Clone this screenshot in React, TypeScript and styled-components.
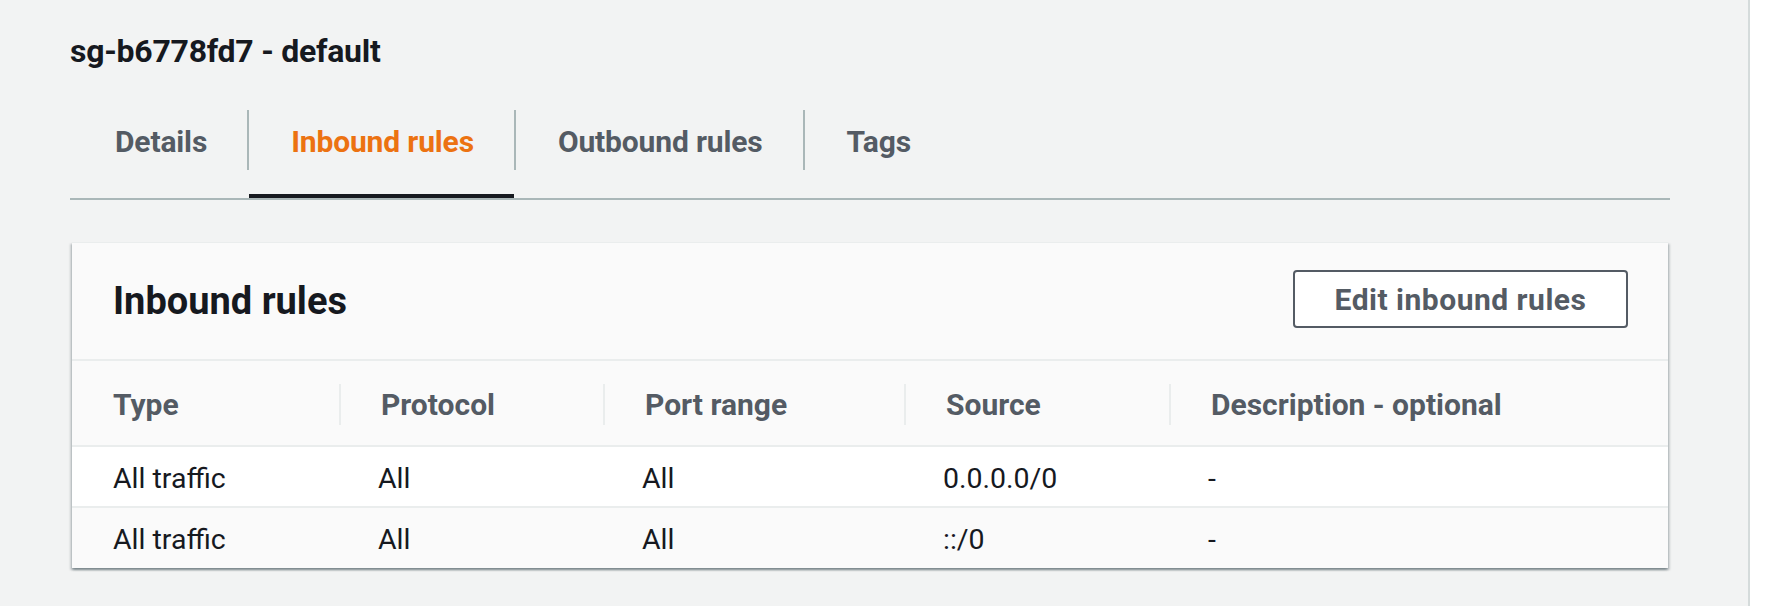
import React, { useState } from "react";
import styled, { createGlobalStyle } from "styled-components";

const GlobalStyle = createGlobalStyle`
  html, body {
    margin: 0;
    padding: 0;
    background: #f2f3f3;
  }
  body {
    font-family: Roboto, "Liberation Sans", Arial, sans-serif;
    color: #16191f;
  }
  * { box-sizing: border-box; }
`;

const Shell = styled.div`
  display: flex;
  min-height: 100vh;
  height: 606px;
  background: #f2f3f3;
`;

const Main = styled.main`
  flex: 1;
  padding: 33px 0 0 70px;
`;

const Content = styled.div`
  width: 1600px;
`;

const Side = styled.aside`
  width: 32px;
  border-left: 2px solid #d5dbdb;
  background: #ffffff;
`;

const Title = styled.h1`
  margin: 0;
  font-size: 32px;
  line-height: 36px;
  font-weight: 700;
  letter-spacing: -0.25px;
  color: #16191f;
`;

const TabList = styled.div`
  display: flex;
  margin-top: 31px;
  padding-left: 3px;
  border-bottom: 2px solid #aab7b8;
`;

const Tab = styled.button<{ $active: boolean; $first: boolean }>`
  position: relative;
  margin: 0;
  padding: 10px 0 28px;
  border: 0;
  background: none;
  font-family: inherit;
  font-size: 30px;
  font-weight: 700;
  letter-spacing: -0.15px;
  color: ${(p) => (p.$active ? "#ec7211" : "#545b64")};
  cursor: pointer;

  &::after {
    content: "";
    display: ${(p) => (p.$active ? "block" : "none")};
    position: absolute;
    left: ${(p) => (p.$first ? "0" : "2px")};
    right: 0;
    bottom: 0;
    height: 4px;
    background: #16191f;
  }
`;

const TabLabel = styled.span<{ $first: boolean }>`
  display: block;
  height: 60px;
  padding: 4px 40px 0 42px;
  line-height: 56px;
  border-left: ${(p) => (p.$first ? "none" : "2px solid #aab7b8")};
  white-space: nowrap;
`;

const Panel = styled.section`
  margin: 42px 2px 0;
  background: #ffffff;
  border-top: 1px solid #eaeded;
  box-shadow: 0 2px 2px 0 rgba(0, 28, 36, 0.3), 2px 2px 2px 0 rgba(0, 28, 36, 0.15),
    -2px 2px 2px 0 rgba(0, 28, 36, 0.15);
`;

const PanelHeader = styled.header`
  display: flex;
  align-items: center;
  justify-content: space-between;
  height: 118px;
  padding: 0 40px 0 41px;
  background: #fafafa;
  border-bottom: 2px solid #eaeded;
`;

const Heading = styled.h2`
  margin: 0;
  font-size: 38px;
  line-height: 44px;
  font-weight: 700;
  color: #16191f;
`;

const Button = styled.button`
  width: 335px;
  height: 58px;
  margin-bottom: 4px;
  border: 2px solid #545b64;
  border-radius: 4px;
  background: #ffffff;
  color: #545b64;
  font-family: inherit;
  font-size: 30px;
  font-weight: 700;
  letter-spacing: 0.5px;
  cursor: pointer;
`;

const Table = styled.table`
  width: 100%;
  border-collapse: collapse;
  table-layout: fixed;
`;

const Col = styled.col<{ $w?: number }>`
  width: ${(p) => (p.$w ? `${p.$w}px` : "auto")};
`;

const HeadRow = styled.tr`
  height: 85px;
  background: #fafafa;
`;

const Th = styled.th`
  padding: 2px 0 0;
  text-align: left;
  vertical-align: middle;
  font-size: 30px;
  font-weight: 700;
  color: #545b64;
`;

const ThInner = styled.div<{ $first: boolean }>`
  height: 41px;
  line-height: 41px;
  padding-left: ${(p) => (p.$first ? "41px" : "40px")};
  border-left: ${(p) => (p.$first ? "none" : "2px solid #eaeded")};
  white-space: nowrap;
`;

const Row = styled.tr<{ $alt: boolean }>`
  height: 61px;
  border-top: 2px solid #eaeded;
  background: ${(p) => (p.$alt ? "#fafafa" : "#ffffff")};
`;

const Td = styled.td`
  padding: 4px 0 0 39px;
  font-size: 28.5px;
  line-height: 34px;
  color: #16191f;
  vertical-align: middle;
  white-space: nowrap;

  &:first-child {
    padding-left: 41px;
  }
`;

const tabs = ["Details", "Inbound rules", "Outbound rules", "Tags"];
const columns = [
  { label: "Type", width: 267 },
  { label: "Protocol", width: 264 },
  { label: "Port range", width: 301 },
  { label: "Source", width: 265 },
  { label: "Description - optional" },
];
const rules = [
  ["All traffic", "All", "All", "0.0.0.0/0", "-"],
  ["All traffic", "All", "All", "::/0", "-"],
];

export default function App() {
  const [active, setActive] = useState(1);
  return (
    <>
      <GlobalStyle />
      <Shell>
        <Main>
          <Content>
            <Title>sg-b6778fd7 - default</Title>
            <TabList role="tablist">
              {tabs.map((t, i) => (
                <Tab
                  key={t}
                  role="tab"
                  $active={i === active}
                  $first={i === 0}
                  onClick={() => setActive(i)}
                >
                  <TabLabel $first={i === 0}>{t}</TabLabel>
                </Tab>
              ))}
            </TabList>
            <Panel>
              <PanelHeader>
                <Heading>Inbound rules</Heading>
                <Button>Edit inbound rules</Button>
              </PanelHeader>
              <Table>
                <colgroup>
                  {columns.map((c) => (
                    <Col key={c.label} $w={c.width} />
                  ))}
                </colgroup>
                <thead>
                  <HeadRow>
                    {columns.map((c, i) => (
                      <Th key={c.label}>
                        <ThInner $first={i === 0}>{c.label}</ThInner>
                      </Th>
                    ))}
                  </HeadRow>
                </thead>
                <tbody>
                  {rules.map((r, ri) => (
                    <Row key={ri} $alt={ri % 2 === 1}>
                      {r.map((cell, ci) => (
                        <Td key={ci}>{cell}</Td>
                      ))}
                    </Row>
                  ))}
                </tbody>
              </Table>
            </Panel>
          </Content>
        </Main>
        <Side />
      </Shell>
    </>
  );
}
